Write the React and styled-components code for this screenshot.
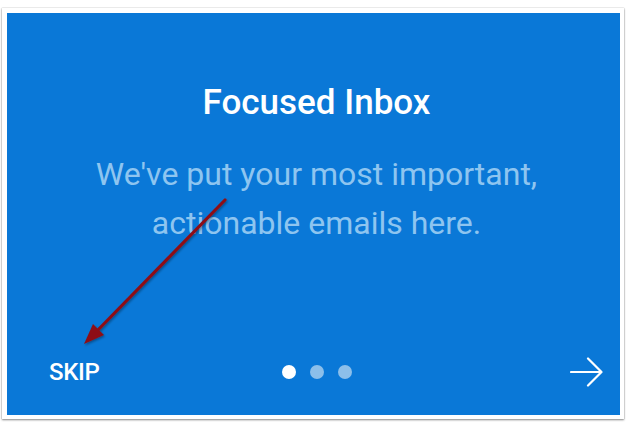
import React from "react";
import styled, { createGlobalStyle } from "styled-components";

const GlobalStyle = createGlobalStyle`
  html, body {
    margin: 0;
    padding: 0;
    background: #ffffff;
  }
  body {
    font-family: "Roboto", "Liberation Sans", sans-serif;
  }
`;

// 캡처 프레임
const Page = styled.div`
  position: relative;
  width: 627px;
  height: 422px;
  overflow: hidden;
`;

const Frame = styled.div`
  margin: 8px 0 0 2px;
  width: 622px;
  height: 411px;
  box-sizing: border-box;
  padding: 5px 4px 4px 5px;
  background: #ffffff;
  box-shadow: 0 1px 2px rgba(0, 0, 0, 0.45), 0 0 1px rgba(0, 0, 0, 0.3);
`;

const Card = styled.div`
  width: 613px;
  height: 402px;
  box-sizing: border-box;
  padding: 69px 17px 27px 42px;
  background: #0a78d7;
  display: flex;
  flex-direction: column;
  align-items: stretch;
`;

const Title = styled.h1`
  margin: 0 0 0 -19px;
  font-size: 35px;
  line-height: 42px;
  font-weight: 500;
  color: #ffffff;
  text-align: center;
`;

const Subtitle = styled.p`
  margin: 26px 0 0 -19px;
  font-size: 32px;
  line-height: 49px;
  font-weight: 400;
  color: #8ec5f0;
  text-align: center;
`;

const BottomRow = styled.div`
  margin-top: auto;
  height: 32px;
  display: grid;
  grid-template-columns: 1fr auto 1fr;
  align-items: center;
`;

const Skip = styled.span`
  font-size: 24px;
  font-weight: 500;
  color: #ffffff;
  letter-spacing: -0.3px;
`;

const Dots = styled.div`
  display: flex;
  gap: 14px;
  margin-left: -19px;
`;

const Dot = styled.span`
  width: 14px;
  height: 14px;
  border-radius: 50%;
  background: ${p => (p.$active ? "#ffffff" : "#8cbfea")};
`;

const NextButton = styled.div`
  justify-self: end;
  display: flex;
  align-items: center;
`;

const Annotation = styled.svg`
  position: absolute;
  left: 0;
  top: 0;
  pointer-events: none;
`;

const App = () => {
  return (
    <Page>
      <GlobalStyle />
      <Frame>
        <Card>
          <Title>Focused Inbox</Title>
          <Subtitle>
            We've put your most important,
            <br />
            actionable emails here.
          </Subtitle>
          <BottomRow>
            <Skip>SKIP</Skip>
            <Dots>
              <Dot $active />
              <Dot />
              <Dot />
            </Dots>
            <NextButton>
              <svg width="33" height="30" viewBox="0 0 33 30" fill="none">
                <path
                  d="M1 15 H31 M18 1.5 L31.5 15 L18 28.5"
                  stroke="#ffffff"
                  strokeWidth="2.2"
                  strokeLinecap="round"
                  strokeLinejoin="round"
                />
              </svg>
            </NextButton>
          </BottomRow>
        </Card>
      </Frame>

      {/* 빨간 주석 화살표 */}
      <Annotation width="627" height="422" viewBox="0 0 627 422">
        <defs>
          <filter id="shadow" x="-20%" y="-20%" width="140%" height="140%">
            <feDropShadow dx="1" dy="1.5" stdDeviation="1.2" floodColor="#000" floodOpacity="0.35" />
          </filter>
        </defs>
        <g filter="url(#shadow)">
          <line x1="225" y1="200" x2="96" y2="332" stroke="#8e1016" strokeWidth="3.2" strokeLinecap="round" />
          <polygon points="84,344 93,324 104,335" fill="#8e1016" />
        </g>
      </Annotation>
    </Page>
  );
};

export default App;
